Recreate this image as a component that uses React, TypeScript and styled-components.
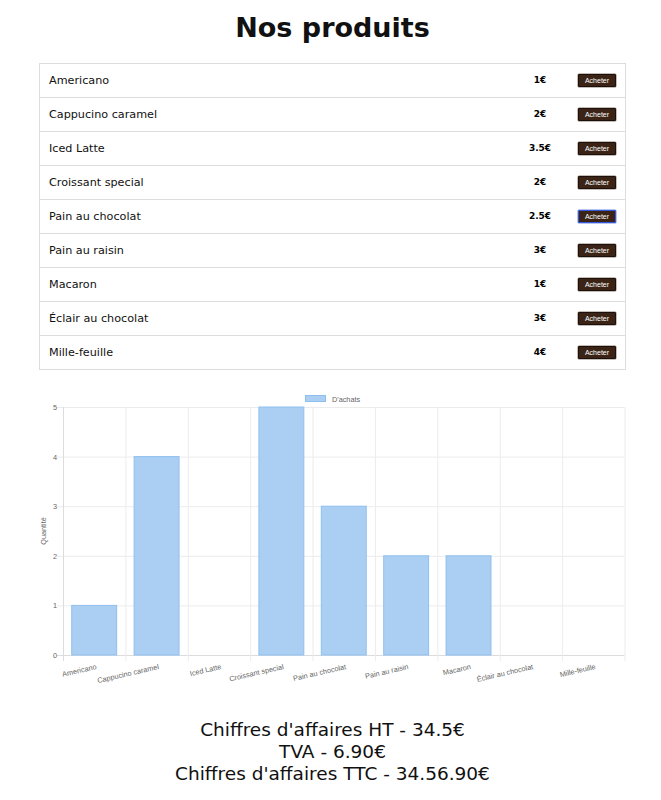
import React from "react";
import styled, {createGlobalStyle} from "styled-components";

type Product = {
    name: string
    price: string
    qty: number
}

const products: Product[] = [
    {name: "Americano", price: "1€", qty: 1},
    {name: "Cappucino caramel", price: "2€", qty: 4},
    {name: "Iced Latte", price: "3.5€", qty: 0},
    {name: "Croissant special", price: "2€", qty: 5},
    {name: "Pain au chocolat", price: "2.5€", qty: 3},
    {name: "Pain au raisin", price: "3€", qty: 2},
    {name: "Macaron", price: "1€", qty: 2},
    {name: "Éclair au chocolat", price: "3€", qty: 0},
    {name: "Mille-feuille", price: "4€", qty: 0},
];

const GlobalStyle = createGlobalStyle`
    body {
        margin: 0;
        background: #fff;
        font-family: "DejaVu Sans", Verdana, sans-serif;
        color: #000;
    }
`

// chart geometry (in page coords, the svg viewBox is offset to match)
const LEFT = 63;
const RIGHT = 624.5;
const TOP = 406;
const BOTTOM = 654;
const MAX = 5;
const colW = (RIGHT - LEFT) / products.length;
const unit = (BOTTOM - TOP) / MAX;

const Chart = () => {
    const ticks = [0, 1, 2, 3, 4, 5];
    return (
        <ChartSvg viewBox="39 380 587 310" width={587} height={310}>
            {/* legend */}
            <rect x={305.5} y={394.5} width={20} height={6} fill="#abcff3" stroke="#8fbfef" strokeWidth={1}/>
            <ChartText x={332} y={400.5}>D'achats</ChartText>

            {/* horizontal grid */}
            {ticks.map(t => {
                const y = BOTTOM - t * unit + 0.5;
                return (
                    <g key={t}>
                        <line x1={LEFT - 6} x2={RIGHT} y1={y} y2={y} stroke={t === 0 ? "#dcdcdc" : "#ececec"}/>
                        <ChartText x={LEFT - 6} y={y + 2.5} textAnchor="end">{t}</ChartText>
                    </g>
                );
            })}

            {/* vertical grid */}
            {Array.from({length: products.length + 1}).map((_, i) => {
                const x = LEFT + i * colW + 0.5;
                return <line key={i} x1={x} x2={x} y1={TOP} y2={BOTTOM + 6}
                             stroke={i === 0 ? "#dcdcdc" : "#ececec"}/>;
            })}

            {/* bars */}
            {products.map((p, i) => {
                if (!p.qty) return null;
                const w = colW * 0.72;
                const cx = LEFT + i * colW + colW / 2;
                const h = p.qty * unit;
                return <rect key={p.name} x={cx - w / 2} y={BOTTOM - h} width={w} height={h}
                             fill="#abcff3" stroke="#8fbfef" strokeWidth={1}/>;
            })}

            {/* x labels */}
            {products.map((p, i) => {
                const cx = LEFT + i * colW + colW / 2 + 2;
                return (
                    <ChartText key={p.name} x={cx} y={668} textAnchor="end"
                               transform={`rotate(-13 ${cx} 665)`}>{p.name}</ChartText>
                );
            })}

            <ChartText x={46} y={530} textAnchor="middle" transform="rotate(-90 46 530)">Quantité</ChartText>
        </ChartSvg>
    );
};

export default function App() {
    return (
        <Page>
            <GlobalStyle/>
            <Title>Nos produits</Title>
            <Table>
                {products.map((p, i) => (
                    <Row key={p.name}>
                        <Name>{p.name}</Name>
                        <Price>{p.price}</Price>
                        <BuyButton $focused={i === 4}>Acheter</BuyButton>
                    </Row>
                ))}
            </Table>
            <Chart/>
            <Summary>
                <p>Chiffres d'affaires HT - 34.5€</p>
                <p>TVA - 6.90€</p>
                <p>Chiffres d'affaires TTC - 34.56.90€</p>
            </Summary>
        </Page>
    );
}

const Page = styled.div`
    width: 587px;
    margin: 0 0 0 39px;
    padding-top: 12px;
    display: flex;
    flex-direction: column;
    align-items: stretch;
`

const Title = styled.h1`
    margin: 0 0 19px;
    font-size: 27px;
    line-height: 32px;
    font-weight: bold;
    text-align: center;
    color: #111;
`

const Table = styled.div`
    border: 1px solid #ddd;
    border-bottom: none;
`

const Row = styled.div`
    height: 33px;
    border-bottom: 1px solid #ddd;
    display: flex;
    align-items: center;
    padding: 0 9px;
`

const Name = styled.span`
    flex: 1;
    font-size: 11.2px;
    color: #111;
`

const Price = styled.span`
    width: 50px;
    text-align: center;
    font-size: 9px;
    font-weight: bold;
    margin-right: 13px;
    margin-bottom: 2px;
`

const BuyButton = styled.button<{ $focused?: boolean }>`
    width: 38px;
    height: 13px;
    padding: 0;
    font-family: "Liberation Sans", Arial, sans-serif;
    font-size: 7px;
    color: #fff;
    background: #3b2416;
    border: 1px solid ${p => p.$focused ? "#3458d8" : "#1c110a"};
    border-radius: 1px;
    box-shadow: 0 0 0 0.5px ${p => p.$focused ? "#6f8ae6" : "#8a7a70"};
`

const ChartSvg = styled.svg`
    display: block;
    margin-top: 11px;
    overflow: visible;
`

const ChartText = styled.text`
    font-family: "Liberation Sans", Arial, sans-serif;
    font-size: 7.3px;
    fill: #666;
`

const Summary = styled.div`
    margin-top: 28px;
    text-align: center;
    font-size: 18.5px;
    line-height: 22px;
    color: #111;

    p {
        margin: 0;
    }
`
